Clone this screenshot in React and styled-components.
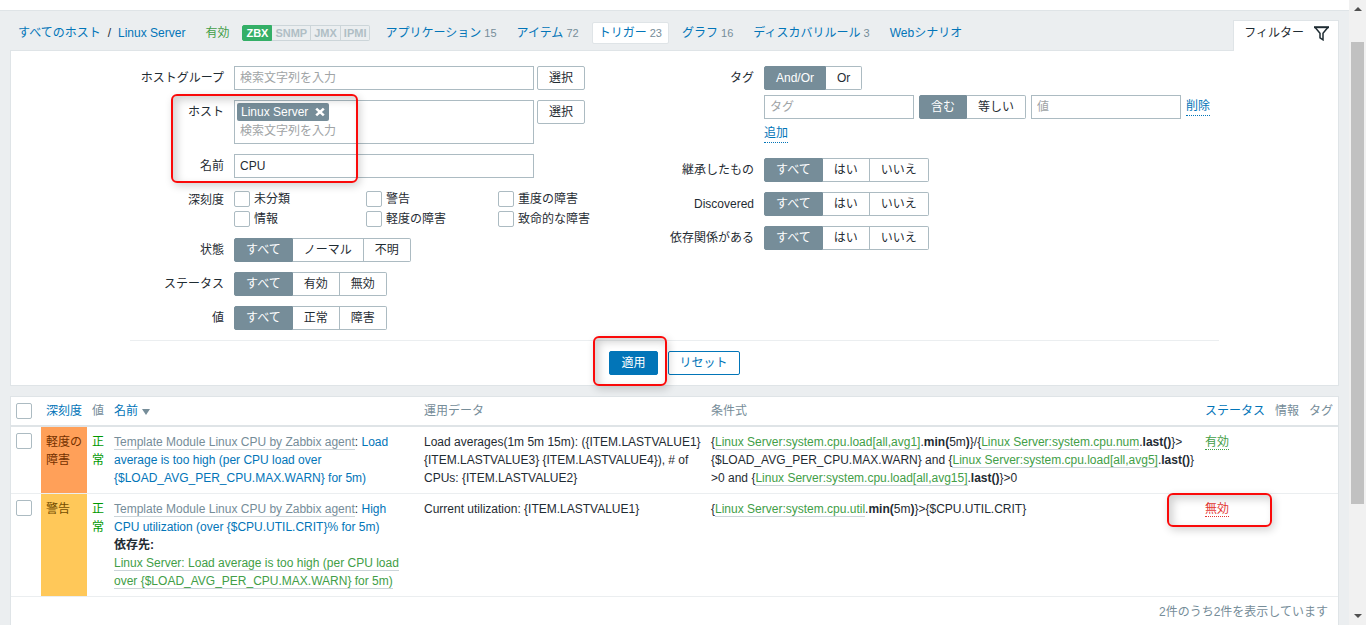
import React from 'react'
import styled, { createGlobalStyle, css } from 'styled-components'

const GlobalStyle = createGlobalStyle`
  * {
    box-sizing: border-box;
  }
  body {
    margin: 0;
    background: #ebeef0;
    overflow: hidden;
  }
  body, button, input {
    font-family: "Liberation Sans", Arial, "Noto Sans CJK JP", sans-serif;
    font-size: 12px;
    line-height: 18px;
    color: #1f2c33;
  }
  a {
    color: #0275b8;
    text-decoration: none;
  }
`

const Page = styled.div`
  display: flex;
  height: 100vh;
`

const Content = styled.div`
  flex: 1;
  min-width: 0;
  overflow: hidden;
`

const TopStrip = styled.div`
  height: 11px;
  background: #fff;
  border-bottom: 1px solid #dfe4e7;
`

const Main = styled.main`
  padding: 0 10px;
`

/* ---- host navigation ---- */

const HostBar = styled.div`
  display: flex;
  justify-content: space-between;
  align-items: flex-end;
`

const HostNav = styled.nav`
  display: flex;
  align-items: center;
  gap: 6px;
  padding: 11px 0 6px 1px;
  white-space: nowrap;
`

const NavItem = styled.div`
  height: 22px;
  padding: 0 6px;
  line-height: 20px;
  border: 1px solid transparent;
  border-radius: 2px;

  ${p => p.$active && css`
    background: #fff;
    border-color: #dfe4e7;
  `}

  sup {
    font-size: 11px;
    line-height: 1;
    vertical-align: baseline;
    color: #768d99;
  }
`

const Crumbs = styled(NavItem)`
  display: flex;
  gap: 7px;
`

const Enabled = styled.span`
  color: #429e47;
`

const Interfaces = styled.div`
  display: flex;
  margin-right: 2px;
  font-size: 11px;
  font-weight: bold;
  line-height: 14px;

  span {
    padding: 0 3px;
    color: #b0bec5;
    border: 1px solid #ccd5d9;
    border-left-width: 0;
  }
  span:first-child {
    color: #fff;
    background: #34af67;
    border: 1px solid #34af67;
    border-radius: 2px 0 0 2px;
  }
  span:last-child {
    border-radius: 0 2px 2px 0;
  }
`

const FilterTab = styled.button`
  display: flex;
  align-items: center;
  gap: 10px;
  height: 31px;
  margin-bottom: -1px;
  padding: 0 9px 6px 10px;
  background: #fff;
  border: 1px solid #dfe4e7;
  border-bottom: 0;
  z-index: 1;
`

/* ---- filter ---- */

const FilterPanel = styled.form`
  padding: 15px 0 10px;
  background: #fff;
  border: 1px solid #dfe4e7;
`

const FilterInner = styled.div`
  max-width: 1089px;
  margin: 0 auto;
`

const FilterColumns = styled.div`
  display: flex;
`

const FilterColumn = styled.div`
  display: flex;
  flex-direction: column;
  gap: 10px;
  flex: ${p => p.$basis || '1'};
`

const MarkedRows = styled.div`
  position: relative;
  display: flex;
  flex-direction: column;
  gap: 10px;
`

const Row = styled.div`
  display: grid;
  grid-template-columns: 94px 1fr;
  column-gap: 10px;
`

const Label = styled.label`
  text-align: right;
  line-height: 24px;
  white-space: nowrap;
`

const Inline = styled.div`
  display: flex;
  align-items: flex-start;
  gap: 3px;
`

const TextInput = styled.input`
  width: ${p => p.$w || 300}px;
  height: 24px;
  padding: 0 5px;
  background: #fff;
  border: 1px solid #acbbc2;
  border-radius: 0;
  outline: 0;

  &::placeholder {
    color: #a0a4a6;
  }
`

const MultiSelect = styled.div`
  width: 300px;
  height: 44px;
  padding: 2px;
  border: 1px solid #acbbc2;

  input {
    display: block;
    width: 100%;
    height: 20px;
    padding: 0 3px;
    border: 0;
    outline: 0;
    background: none;
  }
  input::placeholder {
    color: #a0a4a6;
  }
`

const Chip = styled.span`
  display: flex;
  align-items: center;
  justify-content: space-between;
  width: 92px;
  height: 18px;
  padding: 0 4px;
  color: #fff;
  background: #768d99;
  border-radius: 2px;

  button {
    display: flex;
    padding: 0;
    border: 0;
    background: none;
  }
`

const Button = styled.button`
  height: 24px;
  padding: 0 11px;
  line-height: 20px;
  background: #fff;
  border: 1px solid #acbbc2;
  border-radius: 2px;

  ${p => p.$kind === 'primary' && css`
    color: #fff;
    background: #0275b8;
    border-color: #0275b8;
  `}
  ${p => p.$kind === 'alt' && css`
    color: #0275b8;
    border-color: #0275b8;
  `}
`

const Segments = styled.div`
  display: flex;

  label {
    height: 24px;
    padding: 0 11px;
    line-height: 22px;
    background: #fff;
    border: 1px solid #acbbc2;
    border-left-width: 0;
    white-space: nowrap;
  }
  label:has(input:checked) {
    color: #fff;
    background: #768d99;
    border-color: #768d99;
  }
  label:first-child {
    border-left-width: 1px;
    border-radius: 2px 0 0 2px;
  }
  label:last-child {
    border-radius: 0 2px 2px 0;
  }
  input {
    position: absolute;
    opacity: 0;
    pointer-events: none;
  }
`

const Checks = styled.div`
  display: grid;
  grid-template-columns: repeat(3, 132px);
  row-gap: 4px;
  padding: 3px 0 1px;

  label {
    display: flex;
    gap: 4px;
    height: 16px;
    line-height: 16px;
    white-space: nowrap;
  }
`

const CheckBox = styled.input`
  appearance: none;
  display: block;
  flex: none;
  width: 16px;
  height: 16px;
  margin: 0;
  background: #fff;
  border: 1px solid #acbbc2;
  border-radius: 2px;
`

const TagField = styled.div`
  display: flex;
  flex-direction: column;
  gap: 5px;
`

const TagRow = styled.div`
  display: flex;
  align-items: center;
  gap: 5px;
`

const TagFooter = styled.div`
  display: flex;
  padding: 1px 0 5px;
`

const LinkButton = styled.button`
  padding: 0;
  line-height: 17px;
  color: #0275b8;
  background: none;
  border: 0;
  border-bottom: 1px dotted #0275b8;
`

const Actions = styled.div`
  display: flex;
  justify-content: center;
  gap: 10px;
  margin-top: 10px;
  padding-top: 10px;
  border-top: 1px solid #ebeef0;
`

const Anchor = styled.span`
  position: relative;
`

/* red call-out drawn over the thing it surrounds */
const Mark = styled.i`
  position: absolute;
  left: ${p => p.$x}px;
  top: ${p => p.$y}px;
  width: ${p => p.$w}px;
  height: ${p => p.$h}px;
  border: 2px solid #fa0a0a;
  border-radius: 6px;
  box-shadow: 2px 3px 8px rgba(0, 0, 0, 0.18), inset 4px 4px 8px rgba(0, 0, 0, 0.18);
  pointer-events: none;
  z-index: 2;
`

/* ---- trigger list ---- */

const ListPanel = styled.div`
  margin-top: 10px;
  background: #fff;
  border: 1px solid #dfe4e7;
`

const List = styled.table`
  width: 100%;
  table-layout: fixed;
  border-collapse: separate;
  border-spacing: 0;

  th {
    height: 30px;
    padding: 0 5px;
    font-weight: normal;
    text-align: left;
    white-space: nowrap;
    color: #768d99;
    border-bottom: 2px solid #dfe4e7;
  }
  td {
    padding: 6px 5px;
    vertical-align: top;
    border-bottom: 1px solid #ebeef0;
  }
`

const SortArrow = styled.span`
  display: inline-block;
  margin-left: 4px;
  border: 4px solid transparent;
  border-top: 6px solid #768d99;
  border-bottom: 0;
`

const Severity = styled.td`
  color: ${p => (p.$level === 'average' ? '#733100' : '#734d00')};
  background: ${p => (p.$level === 'average' ? '#ffa059' : '#ffc859')};
`

const Value = styled.td`
  color: #090;
`

const GreyLink = styled.a`
  color: #768d99;
  border-bottom: 1px solid #ccd5d9;
`

const ItemLink = styled.a`
  color: #429e47;
  border-bottom: 1px solid #ccd5d9;
`

const StatusLink = styled.a`
  color: ${p => (p.$off ? '#e33734' : '#429e47')};
  border-bottom: 1px dotted;
`

const Paging = styled.div`
  padding: 6px 10px;
  text-align: right;
  color: #768d99;
`

/* ---- scrollbar ---- */

const ScrollBar = styled.div`
  display: flex;
  flex-direction: column;
  align-items: center;
  justify-content: space-between;
  width: 17px;
  padding: 7px 2px;
  background: #f1f1f1;
`

const ScrollArea = styled.div`
  flex: 1;
  align-self: stretch;
  padding: 31px 0 110px;

  div {
    height: 100%;
    background: #c1c1c1;
  }
`

const ScrollArrow = styled.span`
  border: 4px solid transparent;
  border-top-width: ${p => (p.$down ? '4px' : '0')};
  border-bottom-width: ${p => (p.$down ? '0' : '4px')};
  border-top-color: ${p => (p.$down ? '#505050' : 'transparent')};
  border-bottom-color: ${p => (p.$down ? 'transparent' : '#505050')};
`

const FunnelIcon = () => (
  <svg width="15" height="15" viewBox="0 0 15 15" fill="none" stroke="#1f2c33" strokeWidth="1.5">
    <path d="M1.2 1.5L6 7.2v4.6l3 2V7.2l4.8-5.7" />
    <path d="M0 1.2h15" strokeWidth="2" />
  </svg>
)

const CloseIcon = () => (
  <svg width="10" height="10" viewBox="0 0 10 10" stroke="#fff" strokeWidth="2.6">
    <path d="M1.2 1.6l7.6 6.8M8.8 1.6L1.2 8.4" />
  </svg>
)

const Segmented = ({ name, options }) => (
  <Segments role="radiogroup">
    {options.map((text, i) => (
      <label key={text}>
        <input type="radio" name={name} defaultChecked={i === 0} />
        {text}
      </label>
    ))}
  </Segments>
)

const SegmentRow = ({ label, name, options }) => (
  <Row>
    <Label as="span">{label}</Label>
    <Segmented name={name} options={options} />
  </Row>
)

const Item = ({ children, fn, arg }) => (
  <>
    {'{'}<ItemLink href="#">{children}</ItemLink>.<b>{fn}(</b>{arg}<b>)</b>{'}'}
  </>
)

const tabs = [
  ['アプリケーション', 15],
  ['アイテム', 72],
  ['トリガー', 23],
  ['グラフ', 16],
  ['ディスカバリルール', 3],
  ['Webシナリオ'],
]

const severities = ['未分類', '警告', '重度の障害', '情報', '軽度の障害', '致命的な障害']
const yesNo = ['すべて', 'はい', 'いいえ']

const Header = () => (
  <HostBar>
    <HostNav>
      <Crumbs>
        <a href="#">すべてのホスト</a>
        <span>/</span>
        <a href="#">Linux Server</a>
      </Crumbs>
      <NavItem><Enabled>有効</Enabled></NavItem>
      <Interfaces>
        <span>ZBX</span>
        <span>SNMP</span>
        <span>JMX</span>
        <span>IPMI</span>
      </Interfaces>
      {tabs.map(([text, count]) => (
        <NavItem key={text} $active={text === 'トリガー'}>
          <a href="#">{text}</a>{count && <sup> {count}</sup>}
        </NavItem>
      ))}
    </HostNav>
    <FilterTab type="button">フィルター <FunnelIcon /></FilterTab>
  </HostBar>
)

const Filter = () => (
  <FilterPanel onSubmit={e => e.preventDefault()}>
    <FilterInner>
      <FilterColumns>
        <FilterColumn $basis="0 0 530px">
          <Row>
            <Label htmlFor="groups">ホストグループ</Label>
            <Inline>
              <TextInput id="groups" placeholder="検索文字列を入力" />
              <Button type="button">選択</Button>
            </Inline>
          </Row>
          <MarkedRows>
            <Row>
              <Label htmlFor="hosts">ホスト</Label>
              <Inline>
                <MultiSelect>
                  <Chip>Linux Server <button type="button" aria-label="Linux Server 削除"><CloseIcon /></button></Chip>
                  <input id="hosts" placeholder="検索文字列を入力" />
                </MultiSelect>
                <Button type="button">選択</Button>
              </Inline>
            </Row>
            <Row>
              <Label htmlFor="name">名前</Label>
              <TextInput id="name" defaultValue="CPU" />
            </Row>
            <Mark $x={41} $y={-6} $w={187} $h={89} />
          </MarkedRows>
          <Row>
            <Label as="span">深刻度</Label>
            <Checks>
              {severities.map(text => (
                <label key={text}><CheckBox type="checkbox" />{text}</label>
              ))}
            </Checks>
          </Row>
          <SegmentRow label="状態" name="state" options={['すべて', 'ノーマル', '不明']} />
          <SegmentRow label="ステータス" name="status" options={['すべて', '有効', '無効']} />
          <SegmentRow label="値" name="value" options={['すべて', '正常', '障害']} />
        </FilterColumn>

        <FilterColumn>
          <Row>
            <Label as="span">タグ</Label>
            <TagField>
              <Segmented name="evaltype" options={['And/Or', 'Or']} />
              <TagRow>
                <TextInput $w={150} placeholder="タグ" aria-label="タグ" />
                <Segmented name="operator" options={['含む', '等しい']} />
                <TextInput $w={150} placeholder="値" aria-label="値" />
                <LinkButton type="button">削除</LinkButton>
              </TagRow>
              <TagFooter>
                <LinkButton type="button">追加</LinkButton>
              </TagFooter>
            </TagField>
          </Row>
          <SegmentRow label="継承したもの" name="inherited" options={yesNo} />
          <SegmentRow label="Discovered" name="discovered" options={yesNo} />
          <SegmentRow label="依存関係がある" name="dependent" options={yesNo} />
        </FilterColumn>
      </FilterColumns>

      <Actions>
        <Anchor>
          <Button $kind="primary">適用</Button>
          <Mark $x={-16} $y={-15} $w={74} $h={50} />
        </Anchor>
        <Button type="button" $kind="alt">リセット</Button>
      </Actions>
    </FilterInner>
  </FilterPanel>
)

const Triggers = () => (
  <ListPanel>
    <List>
      <colgroup>
        <col width="30" />
        <col width="46" />
        <col width="22" />
        <col width="310" />
        <col width="287" />
        <col />
        <col width="70" />
        <col width="34" />
        <col width="34" />
      </colgroup>
      <thead>
        <tr>
          <th><CheckBox type="checkbox" aria-label="すべて選択" /></th>
          <th><a href="#">深刻度</a></th>
          <th>値</th>
          <th><a href="#">名前<SortArrow /></a></th>
          <th>運用データ</th>
          <th>条件式</th>
          <th><a href="#">ステータス</a></th>
          <th>情報</th>
          <th>タグ</th>
        </tr>
      </thead>
      <tbody>
        <tr>
          <td><CheckBox type="checkbox" aria-label="軽度の障害" /></td>
          <Severity $level="average">軽度の障害</Severity>
          <Value>正常</Value>
          <td>
            <GreyLink href="#">Template Module Linux CPU by Zabbix agent</GreyLink>:{' '}
            <a href="#">Load average is too high (per CPU load over {'{$LOAD_AVG_PER_CPU.MAX.WARN}'} for 5m)</a>
          </td>
          <td>{'Load averages(1m 5m 15m): ({ITEM.LASTVALUE1} {ITEM.LASTVALUE3} {ITEM.LASTVALUE4}), # of CPUs: {ITEM.LASTVALUE2}'}</td>
          <td>
            <Item fn="min" arg="5m">Linux Server:system.cpu.load[all,avg1]</Item>
            /<Item fn="last">Linux Server:system.cpu.num</Item>&gt;<wbr />
            {'{$LOAD_AVG_PER_CPU.MAX.WARN}'} and{' '}
            <Item fn="last">Linux Server:system.cpu.load[all,avg5]</Item><wbr />&gt;0 and{' '}
            <Item fn="last">Linux Server:system.cpu.load[all,avg15]</Item>&gt;0
          </td>
          <td><StatusLink href="#">有効</StatusLink></td>
          <td />
          <td />
        </tr>
        <tr>
          <td><CheckBox type="checkbox" aria-label="警告" /></td>
          <Severity $level="warning">警告</Severity>
          <Value>正常</Value>
          <td>
            <GreyLink href="#">Template Module Linux CPU by Zabbix agent</GreyLink>:{' '}
            <a href="#">High CPU utilization (over {'{$CPU.UTIL.CRIT}'}% for 5m)</a>
            <br />
            <b>依存先:</b>
            <br />
            <ItemLink href="#">Linux Server: Load average is too high (per CPU load over {'{$LOAD_AVG_PER_CPU.MAX.WARN}'} for 5m)</ItemLink>
          </td>
          <td>{'Current utilization: {ITEM.LASTVALUE1}'}</td>
          <td>
            <Item fn="min" arg="5m">Linux Server:system.cpu.util</Item>
            {'>{$CPU.UTIL.CRIT}'}
          </td>
          <td>
            <Anchor>
              <StatusLink href="#" $off>無効</StatusLink>
              <Mark $x={-38} $y={-9} $w={105} $h={34} />
            </Anchor>
          </td>
          <td />
          <td />
        </tr>
      </tbody>
    </List>
    <Paging>2件のうち2件を表示しています</Paging>
  </ListPanel>
)

const App = () => {
  return (
    <>
      <GlobalStyle />
      <Page>
        <Content>
          <TopStrip />
          <Main>
            <Header />
            <Filter />
            <Triggers />
          </Main>
        </Content>
        <ScrollBar>
          <ScrollArrow />
          <ScrollArea><div /></ScrollArea>
          <ScrollArrow $down />
        </ScrollBar>
      </Page>
    </>
  )
}

export default App
